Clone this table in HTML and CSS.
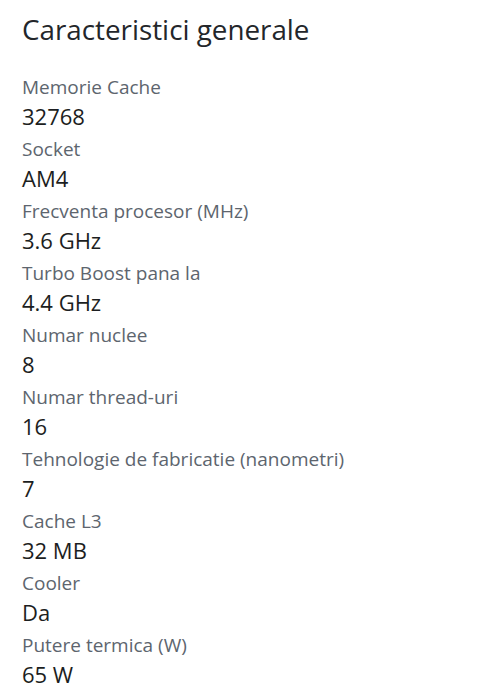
FILE: index.html
```html
<!DOCTYPE html>
<html lang="ro">
<head>
<meta charset="utf-8">
<link rel="stylesheet" href="styles.css">
</head>
<body>
<section class="specs">
  <h2 class="title">Caracteristici generale</h2>
  <dl class="list">
    <div class="row"><dt>Memorie Cache</dt><dd>32768</dd></div>
    <div class="row"><dt>Socket</dt><dd>AM4</dd></div>
    <div class="row"><dt>Frecventa procesor (MHz)</dt><dd>3.6 GHz</dd></div>
    <div class="row"><dt>Turbo Boost pana la</dt><dd>4.4 GHz</dd></div>
    <div class="row"><dt>Numar nuclee</dt><dd>8</dd></div>
    <div class="row"><dt>Numar thread-uri</dt><dd>16</dd></div>
    <div class="row"><dt>Tehnologie de fabricatie (nanometri)</dt><dd>7</dd></div>
    <div class="row"><dt>Cache L3</dt><dd>32 MB</dd></div>
    <div class="row"><dt>Cooler</dt><dd>Da</dd></div>
    <div class="row"><dt>Putere termica (W)</dt><dd>65 W</dd></div>
  </dl>
</section>
</body>
</html>
```
FILE: styles.css
```css
html, body {
  margin: 0;
  background: #ffffff;
}
body {
  font-family: "Open Sans", "Noto Sans", sans-serif;
}
.specs {
  padding: 11px 22px 0 22px;
}
.title {
  margin: 0;
  font-size: 27.8px;
  line-height: 36px;
  font-weight: 400;
  color: #23262a;
}
.list {
  margin: 27px 0 0 0;
  display: flex;
  flex-direction: column;
  gap: 4px;
}
.row {
  display: flex;
  flex-direction: column;
}
.row dt {
  font-size: 19px;
  line-height: 26px;
  color: #5d656e;
}
.row dd {
  margin: 0;
  font-size: 22px;
  line-height: 32px;
  color: #1c1e21;
}
```
